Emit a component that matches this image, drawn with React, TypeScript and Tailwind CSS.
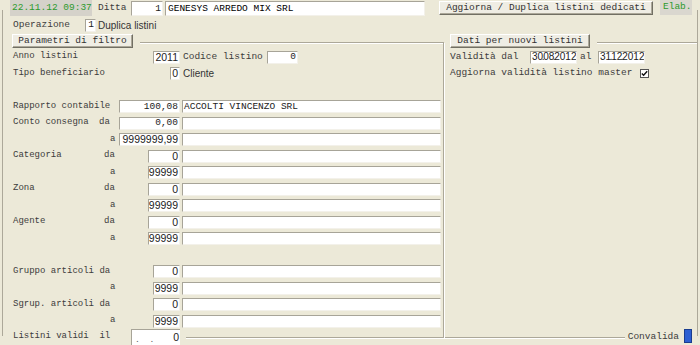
import React from 'react';

const M = "font-['Liberation_Mono','Courier_New',monospace]";
const S = "font-['Liberation_Sans',Arial,sans-serif]";

function Inp({ cls, children, left }: { cls: string; children?: React.ReactNode; left?: boolean }) {
  return (
    <div
      className={`${cls} flex-none bg-white border border-t-[#a7a498] border-l-[#a7a498] border-r-[#f3f1ea] border-b-[#f3f1ea] flex items-center overflow-hidden whitespace-nowrap leading-none text-[#222] ${
        left ? 'justify-start pl-[1px]' : 'justify-end pr-[1px]'
      }`}
    >
      {children}
    </div>
  );
}

function Btn({ cls, children }: { cls: string; children: React.ReactNode }) {
  return (
    <div
      className={`${cls} ${M} flex-none flex items-center justify-center bg-[#efede4] border border-t-white border-l-white border-r-[#716f64] border-b-[#716f64] shadow-[inset_-1px_-1px_0_#aca899] text-[9.5px] text-[#333] leading-none whitespace-nowrap`}
    >
      {children}
    </div>
  );
}

type R = {
  label?: string;
  labelW: string;
  sub?: string;
  num?: string;
  numW?: string;
  mono?: boolean;
  wide?: boolean;
  wideText?: string;
};

const rows: (R | null)[] = [
  null, // Anno (custom)
  null, // Tipo (custom)
  { labelW: 'w-[97px]' },
  { label: 'Rapporto contabile', labelW: 'w-[106px]', num: '100,08', numW: 'w-[61px]', mono: true, wide: true, wideText: 'ACCOLTI VINCENZO SRL' },
  { label: 'Conto consegna', labelW: 'w-[86px]', sub: 'da', num: '0,00', numW: 'w-[61px]', mono: true, wide: true },
  { label: '', labelW: 'w-[97px]', sub: 'a', num: '9999999,99', numW: 'w-[61px]', wide: true },
  { label: 'Categoria', labelW: 'w-[91px]', sub: 'da', num: '0', numW: 'w-[32px]', wide: true },
  { label: '', labelW: 'w-[97px]', sub: 'a', num: '99999', numW: 'w-[32px]', wide: true },
  { label: 'Zona', labelW: 'w-[91px]', sub: 'da', num: '0', numW: 'w-[32px]', wide: true },
  { label: '', labelW: 'w-[97px]', sub: 'a', num: '99999', numW: 'w-[32px]', wide: true },
  { label: 'Agente', labelW: 'w-[91px]', sub: 'da', num: '0', numW: 'w-[32px]', wide: true },
  { label: '', labelW: 'w-[97px]', sub: 'a', num: '99999', numW: 'w-[32px]', wide: true },
  { labelW: 'w-[97px]' },
  { label: 'Gruppo articoli da', labelW: 'w-[110px]', num: '0', numW: 'w-[27px]', wide: true },
  { label: '', labelW: 'w-[97px]', sub: 'a', num: '9999', numW: 'w-[27px]', wide: true },
  { label: 'Sgrup. articoli da', labelW: 'w-[110px]', num: '0', numW: 'w-[27px]', wide: true },
  { label: '', labelW: 'w-[97px]', sub: 'a', num: '9999', numW: 'w-[27px]', wide: true },
];

function LeftRow({ r, i }: { r: R | null; i: number }) {
  const h = i % 2 === 0 ? 'h-4' : 'h-[17px]';
  if (i === 0) {
    return (
      <div className={`${h} flex items-center`}>
        <div className="w-[177px] pl-[10px] flex items-center">
          <span className={`${M} text-[9px] text-[#3c3c3c] whitespace-pre`}>Anno listini</span>
          <div className="ml-auto">
            <Inp cls={`w-[27px] h-[13px] ${S} text-[10.5px]`}>2011</Inp>
          </div>
        </div>
        <span className={`${M} ml-[3px] w-[84px] text-[9.5px] text-[#3c3c3c] whitespace-pre`}>Codice listino</span>
        <Inp cls={`w-[31px] h-[13px] ${M} text-[9.5px]`}>0</Inp>
      </div>
    );
  }
  if (i === 1) {
    return (
      <div className={`${h} flex items-center`}>
        <div className="w-[177px] pl-[10px] flex items-center">
          <span className={`${M} text-[9px] text-[#3c3c3c] whitespace-pre`}>Tipo beneficiario</span>
          <div className="ml-auto">
            <Inp cls={`w-[10px] h-[13px] ${S} text-[10.5px]`}>0</Inp>
          </div>
        </div>
        <span className={`${S} ml-[3px] text-[10px] text-[#333]`}>Cliente</span>
      </div>
    );
  }
  if (!r) return null;
  return (
    <div className={`${h} flex items-center`}>
      <div className="w-[177px] pl-[10px] flex items-center">
        <span className={`${r.labelW} flex-none ${M} text-[9px] text-[#3c3c3c] whitespace-pre`}>{r.label}</span>
        {r.sub && <span className={`${M} text-[9px] text-[#3c3c3c] whitespace-pre`}>{r.sub}</span>}
        {r.num && (
          <div className="ml-auto">
            <Inp cls={`${r.numW} h-[13px] ${r.mono ? `${M} text-[9.5px]` : `${S} text-[10.5px]`}`}>{r.num}</Inp>
          </div>
        )}
      </div>
      {r.wide && (
        <div className="ml-[2px]">
          <Inp cls={`w-[259px] h-[13px] ${M} text-[9.5px] pl-[1px]`} left>
            {r.wideText}
          </Inp>
        </div>
      )}
    </div>
  );
}

function Dot() {
  return <span className="mx-[-1.4px]">.</span>;
}

export default function App() {
  return (
    <div className={`w-[700px] h-[345px] bg-[#ECE9D8] overflow-hidden ${M} text-[#333]`}>
      {/* top row */}
      <div className="h-[17px] flex items-start">
        <div className="ml-[10px] w-[82px] h-4 bg-[#d5d2ca] pl-[2px] flex items-center text-[9.5px] text-[#2e9a2e] whitespace-pre">
          22.11.12 09:37
        </div>
        <span className="ml-[6px] w-[33px] h-4 flex items-center text-[9.5px] text-[#3c3c3c]">Ditta</span>
        <div className="mt-[1px]">
          <Inp cls={`w-[32px] h-[15px] ${M} text-[9.5px]`}>1</Inp>
        </div>
        <div className="ml-[2px] mt-[1px]">
          <Inp cls={`w-[260px] h-[15px] ${M} text-[9.5px] text-black`} left>
            <span className="pl-[1px]">GENESYS ARREDO MIX SRL</span>
          </Inp>
        </div>
        <div className="ml-[14px] mt-[1px]">
          <Btn cls="w-[214px] h-[14px]">Aggiorna / Duplica listini dedicati</Btn>
        </div>
        <div className="ml-[7px] w-[32px] h-[15px] bg-[#dad7cf] flex items-center pl-[3px] text-[9.5px] text-[#2e9a2e]">Elab.</div>
      </div>

      {/* frame */}
      <div className="-mt-[7px] ml-[2px] mr-[2px] h-[326px] border-l border-r border-[#aca899] pt-[7px]">
        {/* operazione */}
        <div className="h-4 pl-[10px] flex items-center">
          <span className="w-[72px] flex-none text-[9.5px] text-[#3c3c3c]">Operazione</span>
          <Inp cls={`w-[11px] h-[13px] ${M} text-[9.5px]`}>1</Inp>
          <span className={`${S} ml-[2px] text-[10px] text-[#333]`}>Duplica listini</span>
        </div>

        <div className="flex items-stretch">
          {/* left group */}
          <div className="w-[441px] mt-[9px] border-t border-r border-b border-[#aca899] shadow-[1px_1px_0_#fff,inset_0_1px_0_#fff] flex flex-col">
            <div className="-mt-[9px] h-[15px] flex items-start">
              <div className="bg-[#ECE9D8] pl-[9px] pr-[7px] h-[15px]">
                <Btn cls="w-[121px] h-[14px]">Parametri di filtro</Btn>
              </div>
            </div>
            {rows.map((r, i) => (
              <LeftRow key={i} r={r} i={i} />
            ))}
            <div className="h-4 -mb-[8px] flex items-start">
              <div className="w-[180px] h-4 bg-[#ECE9D8] pl-[10px] flex items-center">
                <span className="w-[118px] flex-none text-[9px] text-[#3c3c3c] whitespace-pre">Listini validi  il</span>
                <div className="w-[49px] h-4 bg-white border-t border-l border-[#a7a498] flex items-center justify-between px-[1px] leading-none">
                  <span className="text-[8px] text-[#555] self-end pb-[1px] pl-[2px] whitespace-pre">.  .</span>
                  <span className={`${S} text-[10.5px] text-[#222]`}>0</span>
                </div>
              </div>
              <div className="w-[3px] h-4 bg-[#ECE9D8]" />
            </div>
          </div>

          {/* right group */}
          <div className="ml-[1px] w-[252px] mt-[9px] border-t border-b border-[#aca899] shadow-[0_1px_0_#fff,inset_0_1px_0_#fff] flex flex-col">
            <div className="-mt-[9px] h-[15px] flex items-start">
              <div className="bg-[#ECE9D8] pl-[5px] pr-[7px] h-[15px]">
                <Btn cls="w-[140px] h-[14px]">Dati per nuovi listini</Btn>
              </div>
            </div>
            <div className="h-4 pl-[5px] flex items-center">
              <span className="w-[80px] flex-none text-[9.5px] text-[#3c3c3c] whitespace-pre">Validità dal</span>
              <Inp cls={`w-[47px] h-[13px] ${S} text-[10px]`} left>
                30<Dot />08<Dot />2012
              </Inp>
              <span className="w-[21px] flex-none pl-[3px] text-[9.5px] text-[#3c3c3c]">al</span>
              <Inp cls={`w-[47px] h-[13px] ${S} text-[10px]`} left>
                31<Dot />12<Dot />2012
              </Inp>
            </div>
            <div className="h-[17px] pl-[5px] flex items-center">
              <span className="w-[190px] flex-none text-[9.5px] text-[#3c3c3c] whitespace-pre">Aggiorna validità listino master</span>
              <div className="w-[9px] h-[9px] bg-white border border-[#555] flex items-center justify-center">
                <svg width="7" height="7" viewBox="0 0 7 7">
                  <path d="M0.8 3.4 L2.6 5.3 L6.2 1.2" stroke="#111" strokeWidth="1.4" fill="none" />
                </svg>
              </div>
            </div>
            <div className="mt-auto h-4 -mb-[8px] flex justify-end">
              <div className="h-4 bg-[#ECE9D8] pl-[3px] pr-[5px] flex items-start">
                <span className="h-4 flex items-center text-[9.5px] text-[#3c3c3c]">Convalida</span>
                <div className="ml-[5px] w-[8px] h-[14px] bg-[#2d5fd2] border border-[#1a3d8f]" />
              </div>
            </div>
          </div>
        </div>
      </div>
    </div>
  );
}
